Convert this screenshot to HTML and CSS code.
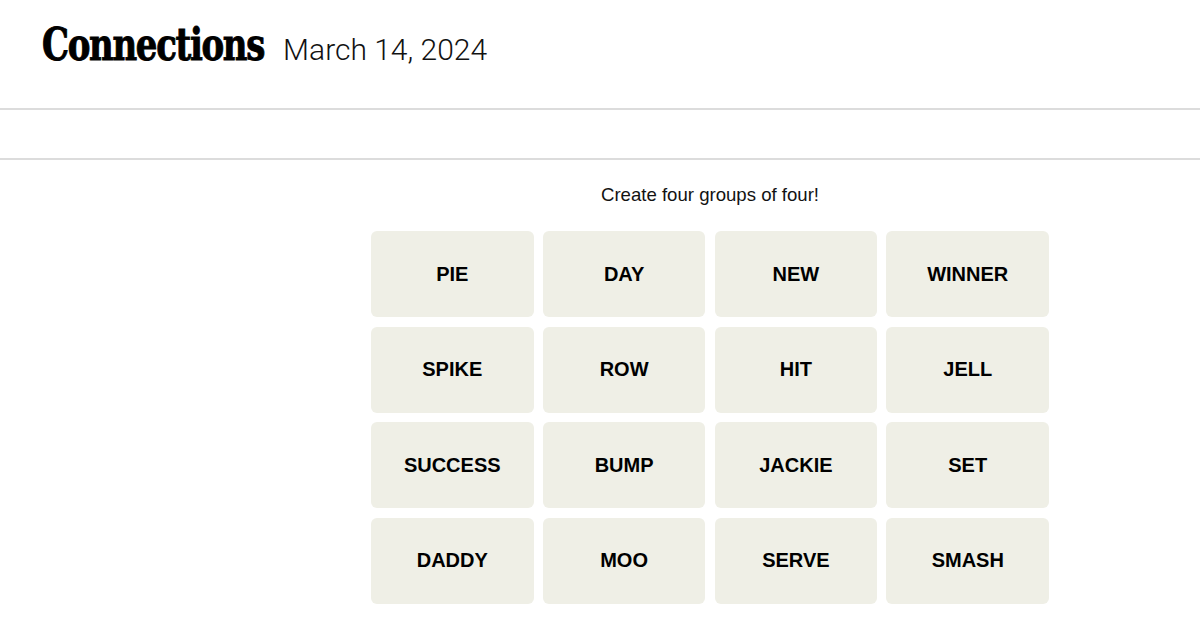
FILE: index.html
```html
<!DOCTYPE html>
<html lang="en">
<head>
<meta charset="utf-8">
<title>Connections</title>
<link rel="stylesheet" href="styles.css">
</head>
<body>
<header class="site-header">
  <h1 class="title">Connections</h1>
  <span class="date">March 14, 2024</span>
</header>
<div class="toolbar"></div>
<div class="layout">
  <aside class="side"></aside>
  <main class="game">
    <p class="prompt">Create four groups of four!</p>
    <div class="board">
      <button class="tile">PIE</button>
      <button class="tile">DAY</button>
      <button class="tile">NEW</button>
      <button class="tile">WINNER</button>
      <button class="tile">SPIKE</button>
      <button class="tile">ROW</button>
      <button class="tile">HIT</button>
      <button class="tile">JELL</button>
      <button class="tile">SUCCESS</button>
      <button class="tile">BUMP</button>
      <button class="tile">JACKIE</button>
      <button class="tile">SET</button>
      <button class="tile">DADDY</button>
      <button class="tile">MOO</button>
      <button class="tile">SERVE</button>
      <button class="tile">SMASH</button>
    </div>
  </main>
</div>
</body>
</html>
```
FILE: styles.css
```css
html, body {
  margin: 0;
  padding: 0;
  background: #fff;
  color: #000;
  font-family: "Liberation Sans", Arial, sans-serif;
}

.site-header {
  height: 110px;
  box-sizing: border-box;
  padding: 21px 0 0 42px;
  display: flex;
  align-items: baseline;
  border-bottom: 2px solid #dcdcdc;
}

.title {
  margin: 0 -18px 0 0;
  display: inline-block;
  font-family: "DejaVu Serif Condensed", "DejaVu Serif", serif;
  font-weight: 700;
  font-size: 44px;
  line-height: 48px;
  letter-spacing: -1.5px;
  color: #000;
  -webkit-text-stroke: 0.9px #000;
  transform: scaleX(0.857);
  transform-origin: left center;
}

.date {
  font-family: Roboto, "Liberation Sans", sans-serif;
  font-weight: 300;
  font-size: 30px;
  line-height: 48px;
  color: #121212;
}

.toolbar {
  height: 48px;
  border-bottom: 2px solid #dcdcdc;
}

.layout {
  display: flex;
}

.side {
  flex: 0 0 220px;
}

.game {
  flex: 1;
  display: flex;
  flex-direction: column;
  align-items: center;
  padding-top: 24px;
}

.prompt {
  margin: 0 0 25px;
  font-size: 18.6px;
  line-height: 22px;
  color: #121212;
}

.board {
  width: 678px;
  display: grid;
  grid-template-columns: repeat(4, 1fr);
  grid-auto-rows: 86.25px;
  gap: 9.33px;
}

.tile {
  border: none;
  margin: 0;
  padding: 0;
  border-radius: 6px;
  background: #efefe6;
  color: #000;
  font-family: "Liberation Sans", Arial, sans-serif;
  font-weight: 700;
  font-size: 20px;
  text-transform: uppercase;
}
```
